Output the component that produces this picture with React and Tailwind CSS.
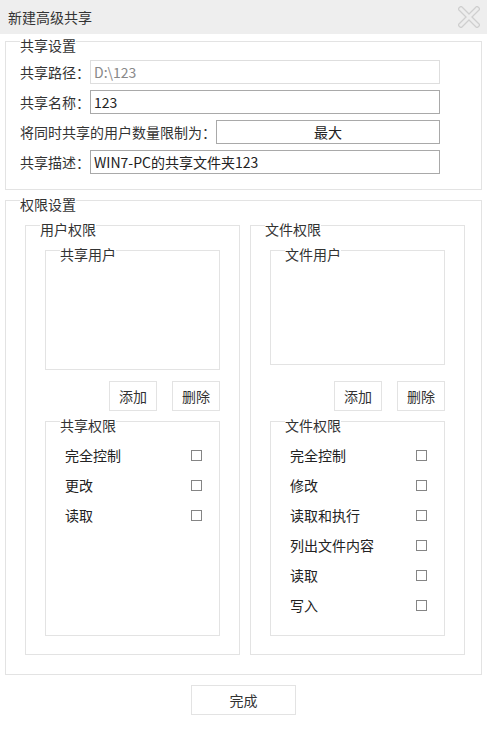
import React from 'react'

const font = { fontFamily: '"Noto Sans CJK SC", "Noto Sans", sans-serif' }

function Legend({ children }) {
    return (
        <span className="absolute -top-[5px] left-[14px] bg-white leading-4 text-[14px] text-[#333]">{children}</span>
    )
}

function Box({ title, className, children }) {
    return (
        <div className={`relative border border-[#e3e3e3] ${className}`}>
            <Legend>{title}</Legend>
            {children}
        </div>
    )
}

function Field({ label, labelWidth = 'w-[70px]', children }) {
    return (
        <div className="flex items-center h-6">
            <span className={`${labelWidth} shrink-0 text-[14px] text-[#333]`}>{label}</span>
            {children}
        </div>
    )
}

function Btn({ children, className }) {
    return (
        <div className={`flex items-center justify-center border border-[#e3e3e3] text-[14px] text-[#333] ${className}`}>{children}</div>
    )
}

function CheckRow({ label }) {
    return (
        <div className="flex items-center justify-between h-[30px] pr-[17px]">
            <span className="text-[14px] text-[#222]">{label}</span>
            <span className="w-[11px] h-[11px] border border-[#858585]" />
        </div>
    )
}

function PermPanel({ title, listTitle, listHeight, btnGap, permTitle, perms }) {
    return (
        <Box title={title} className="w-[215px] h-[430px] pt-[24px] px-[19px]">
            <Box title={listTitle} className={`w-[175px] ${listHeight}`} />
            <div className={`flex justify-end gap-[15px] ${btnGap}`}>
                <Btn className="w-[48px] h-[30px]">添加</Btn>
                <Btn className="w-[48px] h-[30px]">删除</Btn>
            </div>
            <Box title={permTitle} className="w-[175px] h-[215px] mt-[10px] pt-[18px] pl-[19px]">
                {perms.map((p) => <CheckRow key={p} label={p} />)}
            </Box>
        </Box>
    )
}

export default function App() {
    return (
        <div className="w-[487px] h-[729px] bg-white" style={font}>
            <div className="h-[34px] bg-[#eeeeee] flex items-center justify-between pl-[8px] pr-[7px]">
                <span className="text-[14px] text-[#333]">新建高级共享</span>
                <svg width="22" height="22" viewBox="0 0 22 22">
                    <path d="M3 3 L19 19 M19 3 L3 19" stroke="#cfcfcf" strokeWidth="5.5" strokeLinecap="square" />
                    <path d="M3 3 L19 19 M19 3 L3 19" stroke="#ededed" strokeWidth="3" strokeLinecap="square" />
                </svg>
            </div>

            <Box title="共享设置" className="mx-[5px] mt-[7px] h-[149px] pt-[18px] pl-[14px] flex flex-col gap-[6px]">
                <Field label="共享路径：">
                    <div className="w-[350px] h-6 border border-[#dedede] px-[3px] flex items-center text-[14px] text-[#888]">D:\123</div>
                </Field>
                <Field label="共享名称：">
                    <div className="w-[350px] h-6 border border-[#a9a9a9] px-[3px] flex items-center text-[14px] font-normal text-[#222]">123</div>
                </Field>
                <Field label="将同时共享的用户数量限制为：" labelWidth="w-[196px]">
                    <div className="w-[224px] h-6 border border-[#a9a9a9] flex items-center justify-center text-[14px] font-normal text-[#222]">最大</div>
                </Field>
                <Field label="共享描述：">
                    <div className="w-[350px] h-6 border border-[#a9a9a9] px-[3px] flex items-center text-[14px] font-normal text-[#222]">WIN7-PC的共享文件夹123</div>
                </Field>
            </Box>

            <Box title="权限设置" className="mx-[5px] mt-[10px] h-[475px] pt-[24px] px-[19px] flex gap-[10px]">
                <PermPanel
                    title="用户权限"
                    listTitle="共享用户"
                    listHeight="h-[120px]"
                    btnGap="mt-[11px]"
                    permTitle="共享权限"
                    perms={['完全控制', '更改', '读取']}
                />
                <PermPanel
                    title="文件权限"
                    listTitle="文件用户"
                    listHeight="h-[115px]"
                    btnGap="mt-[16px]"
                    permTitle="文件权限"
                    perms={['完全控制', '修改', '读取和执行', '列出文件内容', '读取', '写入']}
                />
            </Box>

            <div className="flex justify-center mt-[10px]">
                <Btn className="w-[105px] h-[30px]">完成</Btn>
            </div>
        </div>
    )
}
